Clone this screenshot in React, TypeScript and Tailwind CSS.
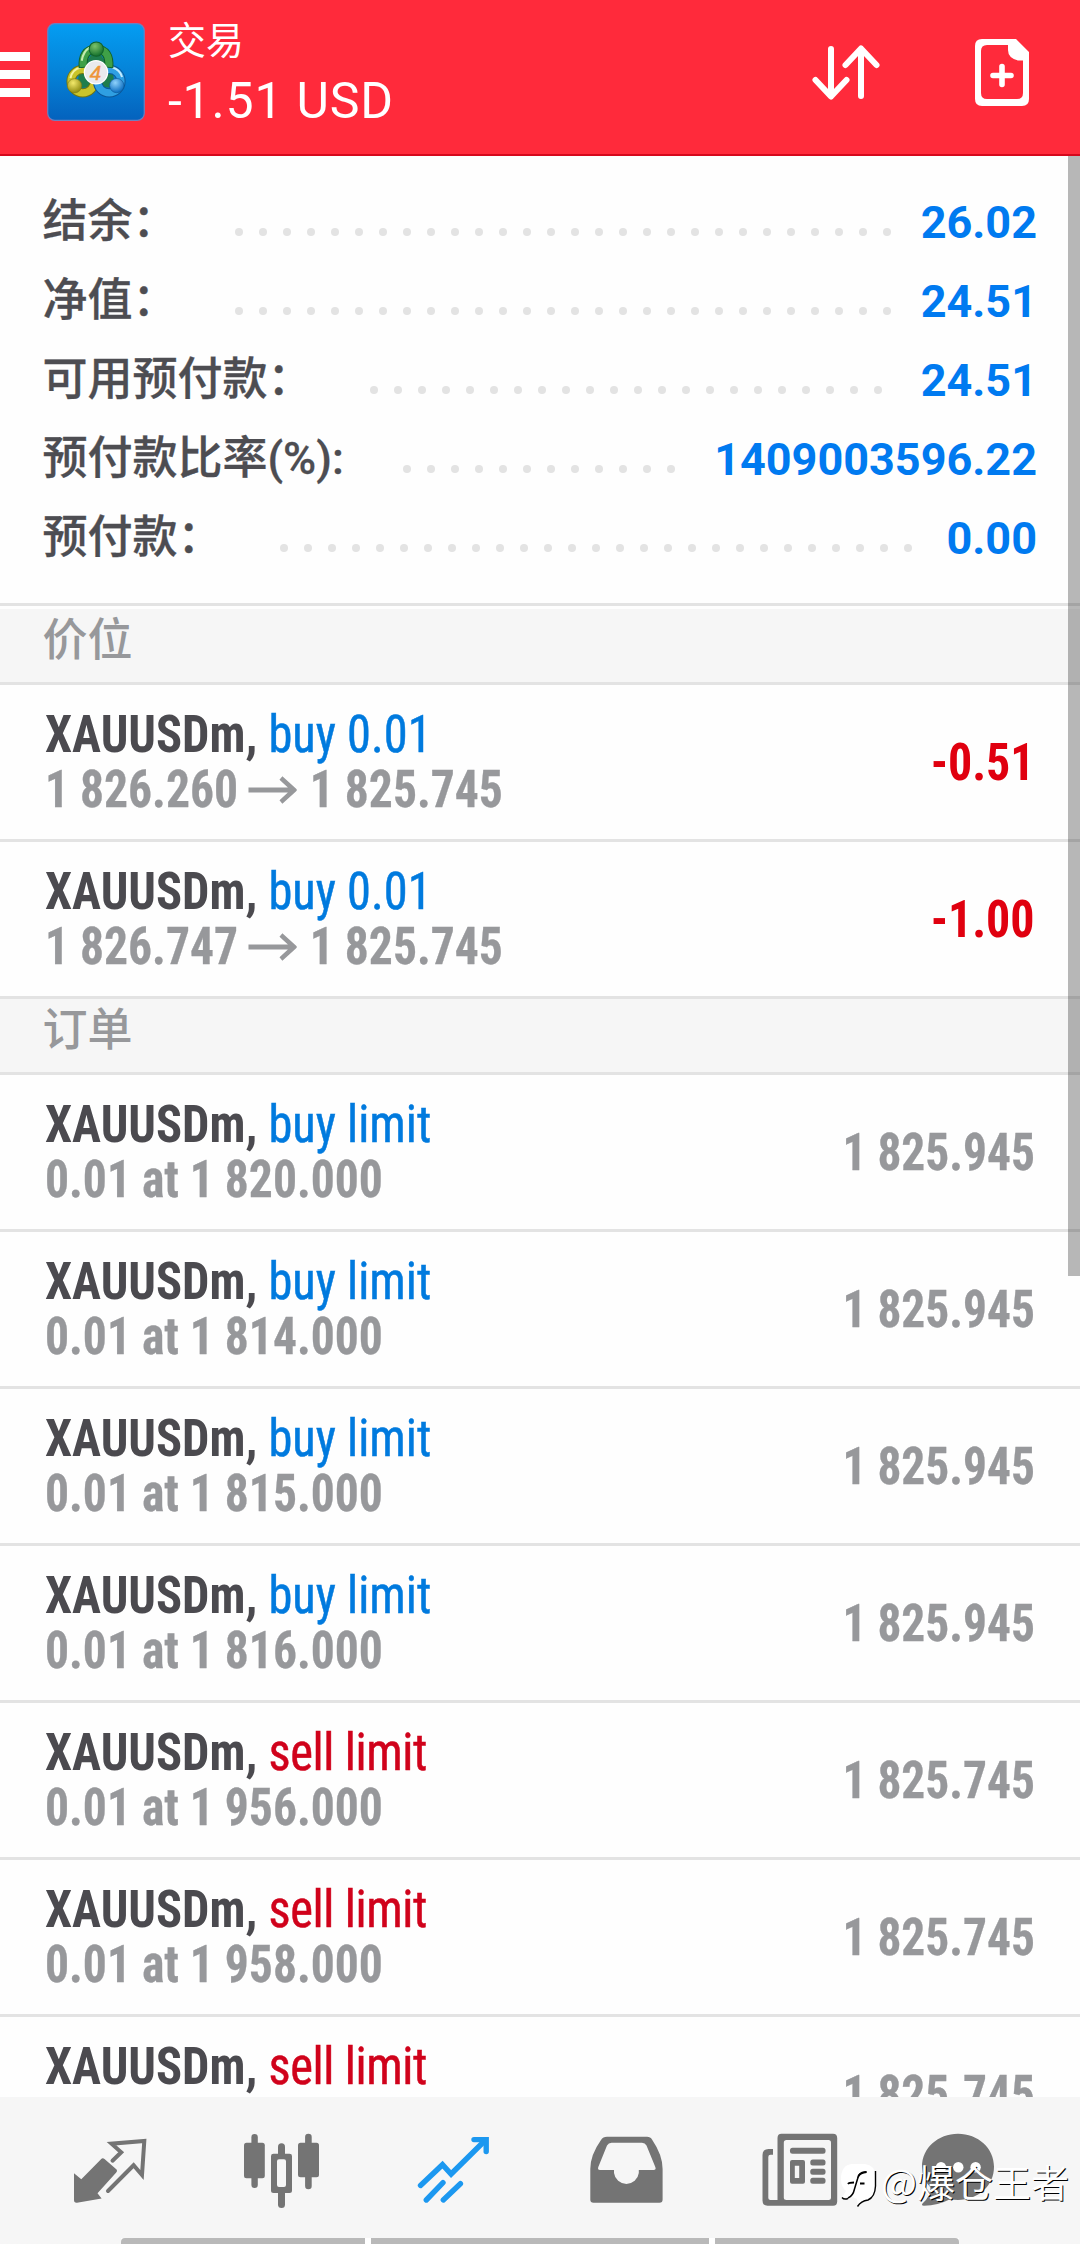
import type { ReactNode } from "react";

type Summary = { label: string; value: string; dots: number; lead: string };

type Deal = {
  symbol: string;
  side: string;
  sell?: boolean;
  detail?: ReactNode;
  value: string;
  profit?: boolean;
};

const summary: Summary[] = [
  { label: "结余：", value: "26.02", dots: 28, lead: "w-[235px]" },
  { label: "净值：", value: "24.51", dots: 28, lead: "w-[235px]" },
  { label: "可用预付款：", value: "24.51", dots: 22, lead: "w-[370px]" },
  { label: "预付款比率(%):", value: "1409003596.22", dots: 12, lead: "w-[403px]" },
  { label: "预付款：", value: "0.00", dots: 27, lead: "w-[280px]" },
];

function Arrow() {
  return (
    <svg viewBox="0 0 52 28" className="mr-[14px] mb-[8px] ml-[11px] inline-block h-7 w-[52px]" fill="none" stroke="#97989b" strokeWidth="4.8">
      <path d="M0 14H49M35 2L49 14L35 26" />
    </svg>
  );
}

const positions: Deal[] = [
  { symbol: "XAUUSDm", side: "buy 0.01", detail: <>1 826.260<Arrow />1 825.745</>, value: "-0.51", profit: true },
  { symbol: "XAUUSDm", side: "buy 0.01", detail: <>1 826.747<Arrow />1 825.745</>, value: "-1.00", profit: true },
];

const orders: Deal[] = [
  { symbol: "XAUUSDm", side: "buy limit", detail: "0.01 at 1 820.000", value: "1 825.945" },
  { symbol: "XAUUSDm", side: "buy limit", detail: "0.01 at 1 814.000", value: "1 825.945" },
  { symbol: "XAUUSDm", side: "buy limit", detail: "0.01 at 1 815.000", value: "1 825.945" },
  { symbol: "XAUUSDm", side: "buy limit", detail: "0.01 at 1 816.000", value: "1 825.945" },
  { symbol: "XAUUSDm", side: "sell limit", sell: true, detail: "0.01 at 1 956.000", value: "1 825.745" },
  { symbol: "XAUUSDm", side: "sell limit", sell: true, detail: "0.01 at 1 958.000", value: "1 825.745" },
  { symbol: "XAUUSDm", side: "sell limit", sell: true, value: "1 825.745" },
];

function Logo() {
  return (
    <svg viewBox="0 0 96 96" className="-mt-px ml-[17px] size-[98px]">
      <defs>
        <linearGradient id="tile" x1="0" y1="0" x2="0" y2="1">
          <stop offset="0" stopColor="#049df2" />
          <stop offset="0.5" stopColor="#0583d8" />
          <stop offset="1" stopColor="#0462bd" />
        </linearGradient>
        <radialGradient id="green" cx="0.4" cy="0.3" r="0.7">
          <stop offset="0" stopColor="#7cc26a" />
          <stop offset="1" stopColor="#14712c" />
        </radialGradient>
        <radialGradient id="yellow" cx="0.4" cy="0.3" r="0.7">
          <stop offset="0" stopColor="#f3e96b" />
          <stop offset="1" stopColor="#8f8a10" />
        </radialGradient>
        <radialGradient id="blue" cx="0.4" cy="0.3" r="0.7">
          <stop offset="0" stopColor="#8fd2fb" />
          <stop offset="1" stopColor="#0a6cc0" />
        </radialGradient>
      </defs>
      <rect x="0.7" y="0.7" width="94.6" height="94.6" rx="7" fill="url(#tile)" stroke="#6d7fc0" strokeWidth="1.2" />
      <path d="M48 24L65 50L66 64L48 62L30 64L31 50Z" fill="#1f7d4d" />
      <g fill="none">
        <circle cx="35" cy="57" r="11.500" stroke="#6e7412" strokeWidth="9" />
        <circle cx="35" cy="57" r="11.500" stroke="#c9c42a" strokeWidth="7" />
        <path d="M23 54A13 13 0 0 1 33 43.500" stroke="#f6f3a0" strokeWidth="2" />
        <circle cx="61" cy="57" r="11.500" stroke="#0b5799" strokeWidth="9" />
        <circle cx="61" cy="57" r="11.500" stroke="#2f9fe2" strokeWidth="7" />
        <path d="M64 43.500A13 13 0 0 1 73.500 53" stroke="#c3ebff" strokeWidth="2" />
        <path d="M35.500 44Q34 26 48 25.500Q62 26 60.500 44" stroke="#12622b" strokeWidth="9" />
        <path d="M35.500 43Q34 26 48 25.500Q62 26 60.500 43" stroke="#3fa047" strokeWidth="7" />
        <path d="M34 37Q35.500 27.500 42 24" stroke="#c4ecae" strokeWidth="2" />
      </g>
      <circle cx="48.300" cy="25.500" r="7" fill="url(#green)" stroke="#12622b" />
      <circle cx="27" cy="61.500" r="7" fill="url(#yellow)" stroke="#7d7a14" strokeWidth="0.600" />
      <circle cx="68.300" cy="61.300" r="7" fill="url(#blue)" stroke="#0b5799" strokeWidth="0.600" />
      <circle cx="48" cy="48.300" r="12" fill="#fff" />
      <circle cx="48" cy="48.300" r="10.800" fill="#e9eaee" />
      <text x="47.500" y="55.500" textAnchor="middle" fontSize="20" fontStyle="italic" fontFamily="Liberation Sans, sans-serif" fill="#ee9438" stroke="#ee9438" strokeWidth="0.500">4</text>
    </svg>
  );
}

function Header() {
  return (
    <header className="flex h-[156px] shrink-0 items-start border-b-2 border-[#d5081c] bg-[#ff2a3b] pt-6 text-white">
      <div className="mt-7 flex w-[30px] flex-col gap-[9px]">
        <span className="h-[9px] bg-white" />
        <span className="h-[9px] bg-white" />
        <span className="h-[9px] bg-white" />
      </div>
      <Logo />
      <div className="-mt-[6px] ml-[23px] flex-1">
        <div className="h-[46px] text-[38px] leading-[46px] whitespace-nowrap">交易</div>
        <div className="mt-[7px] text-[50px] leading-[60px] tracking-[0.8px] whitespace-nowrap">-1.51 USD</div>
      </div>
      <svg viewBox="0 0 76 66" className="mt-[15px] mr-[92px] h-[66px] w-[76px]" fill="none" stroke="#fff" strokeWidth="6" strokeLinecap="round" strokeLinejoin="round">
        <path d="M24 10V57M8.500 41L24 57.500L39.500 41" />
        <path d="M54 57V10M38.500 26L54 9.500L69.500 26" />
      </svg>
      <svg viewBox="0 0 54 67" className="mt-[15px] mr-[51px] h-[67px] w-[54px]">
        <path fill="#fff" fillRule="evenodd" d="M7 0H41L54 13V60Q54 67 47 67H7Q0 67 0 60V7Q0 0 7 0ZM12 6Q6 6 6 12V54Q6 60 12 60H42Q48 60 48 54V21.500H43Q33 19 33 11V6Z" />
        <path d="M18 36.500H36M27 27.500V45.500" stroke="#fff" strokeWidth="5.600" strokeLinecap="round" />
      </svg>
    </header>
  );
}

function SummaryRow({ label, value, dots, lead }: Summary) {
  return (
    <div className="flex h-[79px] items-center">
      <div className={`${lead} shrink-0 pt-[4px] pl-[42.5px] text-[45px] font-medium whitespace-nowrap text-[#4d4d52] [-webkit-text-stroke:0.3px_#4d4d52]`}>
        {label}
      </div>
      <div className="mt-6 flex gap-4">
        {Array.from({ length: dots }, (_, i) => (
          <span key={i} className="size-2 rounded-full bg-[#e3e3e3]" />
        ))}
      </div>
      <div className="ml-auto pt-[6px] pr-[43px] text-[45px] font-bold text-[#007af0]">{value}</div>
    </div>
  );
}

function SectionTitle({ children }: { children: ReactNode }) {
  return (
    <div className="h-[76px] shrink-0 border-b-[3px] border-[#e3e3e3] bg-[#f6f6f6] pl-[42.5px] text-[45px] leading-[64px] font-medium text-[#97989b]">
      {children}
    </div>
  );
}

function DealRow({ symbol, side, sell, detail, value, profit }: Deal) {
  return (
    <div className="flex h-[157px] shrink-0 items-center justify-between border-b-[3px] border-[#e3e3e3] pr-[45px] pl-[45px] font-['Roboto_Condensed','Roboto'] text-[51px] leading-[55px] font-bold whitespace-nowrap [font-stretch:75%]">
      <div className="text-[#97989b]">
        <div className="origin-left scale-x-[0.95]">
          <span className="text-[#4b4a4f]">{symbol}, </span>
          <span
            className={
              sell
                ? "font-normal tracking-[-0.4px] text-[#d0021b] [-webkit-text-stroke:0.5px_#d0021b]"
                : "font-normal text-[#007ade] [-webkit-text-stroke:0.5px_#007ade]"
            }
          >
            {side}
          </span>
        </div>
        <div className="h-[55px] origin-left scale-x-[0.9325] [-webkit-text-stroke:0.3px_#97989b]">{detail}</div>
      </div>
      <div className={profit ? "origin-right scale-x-[0.94] text-[#e0000f]" : "origin-right scale-x-[0.93] text-[#97989b] [-webkit-text-stroke:0.3px_#97989b]"}>
        {value}
      </div>
    </div>
  );
}

function Cell({ children }: { children: ReactNode }) {
  return (
    <svg viewBox="0 0 172 147" className="h-[147px] w-[172px]" fill="#747474" stroke="none">
      {children}
    </svg>
  );
}

function NavBar() {
  return (
    <nav className="relative flex h-[147px] shrink-0 bg-[#f6f6f6] pl-6">
      <Cell>
        <path d="M50 76.300L57.300 82.300L77 62.300Q78.600 60.300 80.500 62L92 72Q94 73.700 92 75.700L73.500 96.300L77.600 101.500L53 105.700Q50 106 50 103Z" />
        <path d="M88.500 63.700L97.200 55.300L87.500 46.700L120.300 44L118 78L109.600 68.300L84 94" fill="none" stroke="#747474" strokeWidth="4" strokeLinecap="round" />
      </Cell>
      <Cell>
        <rect x="55.400" y="37" width="6.400" height="54" rx="3.200" />
        <rect x="48" y="45.700" width="20.800" height="35.600" rx="2.500" />
        <rect x="82" y="46.300" width="7" height="14" rx="3.500" />
        <rect x="82" y="92" width="7" height="19" rx="3.500" />
        <path fillRule="evenodd" d="M77.500 56.700H93.500Q96 56.700 96 59V93.500Q96 96 93.500 96H77.500Q75 96 75 93.500V59Q75 56.700 77.500 56.700ZM83 62.300Q81 62.300 81 64.300V88Q81 90 83 90H88Q90 90 90 88V64.300Q90 62.300 88 62.300Z" />
        <rect x="109.100" y="36.700" width="6.600" height="55.600" rx="3.300" />
        <rect x="102" y="45.700" width="21" height="34.600" rx="2.500" />
      </Cell>
      <Cell>
        <g fill="none" stroke="#1c98f0" strokeWidth="5.400" strokeLinecap="round">
          <path d="M52.500 88.500L74.500 67.700L83.100 77L117 43.500" />
          <path d="M106 42.600H118.200V54.500" />
          <path d="M75 85.700L58.300 103M92.400 86.700L75.300 103" />
        </g>
      </Cell>
      <Cell>
        <path fillRule="evenodd" d="M67 39.700H107Q110.500 39.700 112 42.500Q122.600 58 122.600 72V102.500Q122.600 105.700 119.500 105.700H53.500Q50.300 105.700 50.300 102.500V72Q50.300 58 61 43Q63 39.700 67 39.700ZM71.500 45.700Q68.500 45.700 67 48.500L58.300 70Q57.300 73 60 73H74V76A12.500 12.500 0 0 0 98.800 76V73H113.500Q116.500 73 115.300 70L106.500 48.500Q105 45.700 102 45.700Z" />
      </Cell>
      <Cell>
        <path fillRule="evenodd" d="M69.500 36.700H121Q125.200 36.700 125.200 41V104.500Q125.200 108.700 121 108.700H55.500Q50.500 108.700 50.500 103.500V58Q50.500 52 56.500 52H61V57.700H58.500Q56.300 57.700 56.300 60V101Q56.300 103 58.500 103H65.500V41Q65.500 36.700 69.500 36.700ZM74.500 43Q71.800 43 71.800 45.700V100.500Q71.800 103 74.500 103H116.500Q119 103 119 100.500V45.700Q119 43 116.500 43Z" />
        <rect x="78" y="50.700" width="35.500" height="6" rx="2.500" />
        <path fillRule="evenodd" d="M80 63H91Q93 63 93 65V84.700Q93 86.700 91 86.700H80Q78 86.700 78 84.700V65Q78 63 80 63ZM82.800 68.700V81H87.200V68.700Z" />
        <rect x="98.300" y="62.500" width="15.200" height="6" rx="2.500" />
        <rect x="98.300" y="71.700" width="15.200" height="6" rx="2.500" />
        <rect x="98.300" y="80.700" width="15.200" height="6" rx="2.500" />
      </Cell>
      <Cell>
        <path d="M74 36.700C94 36.700 110 51 110 69.800C110 89 94 103 74 103Q70 103 66 102.300Q54 108.500 40 108.700Q36.500 108.500 39 106Q46 100 46.500 90.500Q38 82 38 69.800C38 51 54 36.700 74 36.700Z" />
        <g fill="#fff">
          <circle cx="57" cy="70.300" r="5.200" />
          <circle cx="74.300" cy="70.300" r="5.200" />
          <circle cx="91.600" cy="70.300" r="5.200" />
        </g>
      </Cell>

      {/* watermark over the last two tabs */}
      <div className="absolute top-[62px] left-[840px] flex items-start">
        <svg viewBox="0 0 42 48" className="h-12 w-[42px] overflow-visible">
          <path d="M12 5H25Q35 6 35 17V27Q35 38 26 41L18 47L17 40L10 37L1 40L6 32Q1 28 1 20Q1 6 12 5Z" fill="#fff" />
          <path d="M26.500 13Q19 12 17.500 20L14.500 30Q13 37 8 39" fill="none" stroke="#000" strokeWidth="1.500" />
          <path d="M26.500 13Q20 14 18.500 17" fill="none" stroke="#000" strokeWidth="2" />
          <path d="M8 25Q9 23.500 14 23.500M20 24.500H24.500" fill="none" stroke="#000" strokeWidth="1.800" />
          <path d="M35.500 12V27Q35 38 28 41Q21 42 17.500 47.500M2 38.500Q4 41 8 39.500" fill="none" stroke="#000" strokeWidth="1.400" />
        </svg>
        <span className="-mt-px -ml-px font-['Noto_Sans_CJK_SC',sans-serif] text-[38px] leading-[46px] whitespace-nowrap text-white [text-shadow:1px_1px_0_#000]">
          @爆仓王者
        </span>
      </div>

      <div className="absolute bottom-0 left-[121px] flex h-1.5 gap-1.5 bg-white">
        <span className="w-[244px] rounded-tl bg-[#b9b9b9]" />
        <span className="w-[338px] bg-[#b9b9b9]" />
        <span className="w-[244px] rounded-tr bg-[#b9b9b9]" />
      </div>
    </nav>
  );
}

export default function App() {
  return (
    <div className="flex h-[2244px] w-[1080px] flex-col overflow-hidden bg-white font-['Roboto','Noto_Sans_CJK_SC',sans-serif]">
      <Header />
      <main className="relative flex h-[1941px] shrink-0 flex-col overflow-hidden bg-[#fefefe]">
        <section className="h-[450px] shrink-0 border-b-[3px] border-[#e3e3e3] pt-[24px]">
          {summary.map((row) => (
            <SummaryRow key={row.label} {...row} />
          ))}
        </section>
        <div className="h-[3px] shrink-0" />
        <SectionTitle>价位</SectionTitle>
        {positions.map((d, i) => (
          <DealRow key={i} {...d} />
        ))}
        <SectionTitle>订单</SectionTitle>
        {orders.map((d, i) => (
          <DealRow key={i} {...d} />
        ))}
        <div className="absolute top-0 right-0 h-[1120px] w-3 bg-black/28" />
      </main>
      <NavBar />
    </div>
  );
}
